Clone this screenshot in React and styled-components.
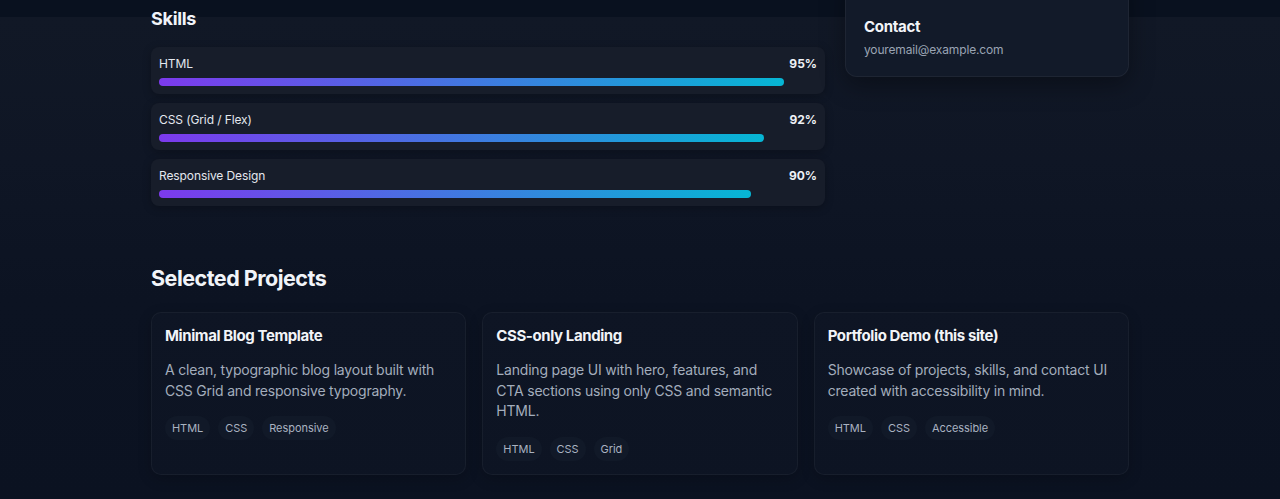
import React from 'react';
import styled, { createGlobalStyle } from 'styled-components';

const GlobalStyle = createGlobalStyle`
    * { box-sizing: border-box; }
    html, body {
        margin: 0;
        height: 100%;
    }
    body {
        font-family: Inter, "Noto Sans", "Liberation Sans", sans-serif;
        color: #e6eaf1;
        background: linear-gradient(to bottom,
            #09111f 0, #09111f 17px,
            #111826 17px, #0f1625 160px,
            #0c1322 300px, #0b1221 100%);
        min-height: 499px;
        overflow: hidden;
    }
`;

const Page = styled.main`
    width: 978px;
    margin: 0 auto;
`;

const TopGrid = styled.div`
    display: grid;
    grid-template-columns: 674px 284px;
    gap: 20px;
    align-items: start;
`;

const SkillsSection = styled.section`
    padding-top: 8px;
`;

const SectionTitle = styled.h2`
    margin: 0 0 ${p => p.$gap}px;
    font-size: ${p => p.$size}px;
    line-height: ${p => p.$lh}px;
    font-weight: 700;
    color: #f1f4f9;
    letter-spacing: ${p => p.$ls}px;
`;

const SkillList = styled.div`
    display: flex;
    flex-direction: column;
    gap: 9px;
`;

const SkillRow = styled.div`
    background: #171d2a;
    border-radius: 8px;
    padding: 8px;
    box-shadow: 0 2px 8px rgba(0, 0, 0, 0.25);
`;

const SkillHead = styled.div`
    display: flex;
    justify-content: space-between;
    align-items: baseline;
    font-size: 12px;
    line-height: 17px;
    margin-bottom: 6px;
`;

const SkillName = styled.span`
    color: #e4e8ef;
    letter-spacing: -0.1px;
`;

const SkillPct = styled.span`
    color: #eef1f6;
    font-weight: 700;
    font-size: 12px;
`;

const Track = styled.div`
    height: 8px;
    border-radius: 999px;
`;

const Fill = styled.div`
    height: 100%;
    border-radius: 999px;
    background: linear-gradient(90deg, #7c3aed, #06b6d4);
`;

const ContactCard = styled.aside`
    margin-top: -30px;
    background: #121a29;
    border: 1px solid rgba(255, 255, 255, 0.05);
    border-radius: 12px;
    padding: 46px 18px 17px;
    box-shadow: 0 8px 24px rgba(0, 0, 0, 0.35);
`;

const ContactTitle = styled.h3`
    margin: 0 0 4px;
    font-size: 15px;
    line-height: 20px;
    font-weight: 700;
    letter-spacing: -0.3px;
    color: #f3f5f9;
`;

const Email = styled.div`
    font-size: 12px;
    line-height: 18px;
    letter-spacing: -0.15px;
    color: #9aa4b4;
`;

const ProjectsSection = styled.section`
    margin-top: 58px;
`;

const ProjectGrid = styled.div`
    display: grid;
    grid-template-columns: repeat(3, 1fr);
    gap: 16px;
`;

const Card = styled.article`
    background: rgba(255, 255, 255, 0.012);
    border: 1px solid rgba(255, 255, 255, 0.045);
    border-radius: 10px;
    padding: 13px 13px 13px;
    box-shadow: 0 4px 14px rgba(0, 0, 0, 0.2);
`;

const CardTitle = styled.h3`
    margin: 0 0 14px;
    font-size: 15px;
    line-height: 20px;
    font-weight: 700;
    letter-spacing: -0.4px;
    color: #f2f4f8;
`;

const CardText = styled.p`
    margin: 0 0 15px;
    font-size: 14px;
    line-height: 20.5px;
    letter-spacing: -0.2px;
    color: #a3adbc;
`;

const Tags = styled.div`
    display: flex;
    gap: 8px;
`;

const Tag = styled.span`
    display: inline-flex;
    align-items: center;
    height: 24px;
    padding: 0 7px;
    border-radius: 999px;
    background: #111928;
    font-size: 11px;
    letter-spacing: -0.05px;
    color: #a9b2c0;
`;

const skills = [
    { name: 'HTML', value: 95 },
    { name: 'CSS (Grid / Flex)', value: 92 },
    { name: 'Responsive Design', value: 90 },
];

const projects = [
    {
        title: 'Minimal Blog Template',
        text: 'A clean, typographic blog layout built with CSS Grid and responsive typography.',
        tags: ['HTML', 'CSS', 'Responsive'],
    },
    {
        title: 'CSS-only Landing',
        text: 'Landing page UI with hero, features, and CTA sections using only CSS and semantic HTML.',
        tags: ['HTML', 'CSS', 'Grid'],
    },
    {
        title: 'Portfolio Demo (this site)',
        text: 'Showcase of projects, skills, and contact UI created with accessibility in mind.',
        tags: ['HTML', 'CSS', 'Accessible'],
    },
];

export default function App() {
    return (
        <>
            <GlobalStyle />
            <Page>
                <TopGrid>
                    <SkillsSection>
                        <SectionTitle $size={18} $lh={22} $gap={17} $ls={-0.3}>Skills</SectionTitle>
                        <SkillList>
                            {skills.map(s => (
                                <SkillRow key={s.name}>
                                    <SkillHead>
                                        <SkillName>{s.name}</SkillName>
                                        <SkillPct>{s.value}%</SkillPct>
                                    </SkillHead>
                                    <Track>
                                        <Fill style={{ width: `${s.value}%` }} />
                                    </Track>
                                </SkillRow>
                            ))}
                        </SkillList>
                    </SkillsSection>
                    <ContactCard>
                        <ContactTitle>Contact</ContactTitle>
                        <Email>youremail@example.com</Email>
                    </ContactCard>
                </TopGrid>

                <ProjectsSection>
                    <SectionTitle $size={21.5} $lh={28} $gap={20} $ls={-0.5}>Selected Projects</SectionTitle>
                    <ProjectGrid>
                        {projects.map(p => (
                            <Card key={p.title}>
                                <CardTitle>{p.title}</CardTitle>
                                <CardText>{p.text}</CardText>
                                <Tags>
                                    {p.tags.map(t => <Tag key={t}>{t}</Tag>)}
                                </Tags>
                            </Card>
                        ))}
                    </ProjectGrid>
                </ProjectsSection>
            </Page>
        </>
    );
}
